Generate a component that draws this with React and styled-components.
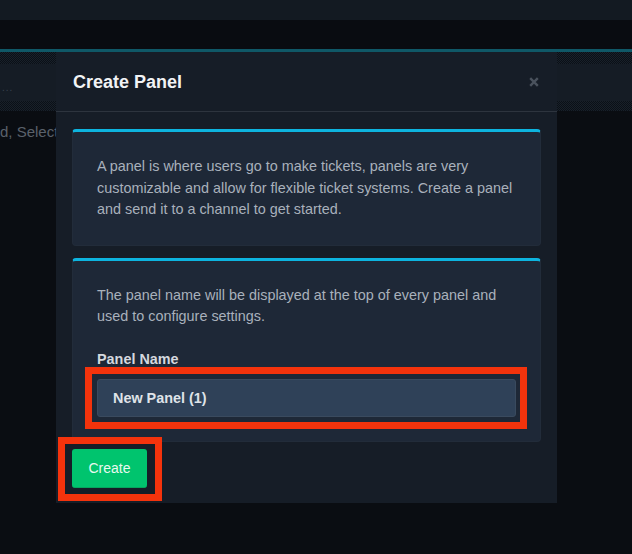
import React from "react";
import styled, { createGlobalStyle } from "styled-components";

const Global = createGlobalStyle`
  html, body { margin: 0; padding: 0; background: #0a0d12; }
  body { font-family: "Liberation Sans", Arial, sans-serif; }
  * { box-sizing: border-box; }
`;

const Page = styled.div`
  position: relative;
  width: 632px;
  height: 554px;
  overflow: hidden;
  background: #0a0d12;
  display: flex;
  flex-direction: column;
`;

const TopBar = styled.div`
  height: 20px;
  background: #131a22;
  flex: none;
`;

const NavBar = styled.div`
  height: 29px;
  background: #090c11;
  flex: none;
`;

const AccentLine = styled.div`
  height: 3px;
  background: #0f5867;
  flex: none;
`;

const Dither = styled.div`
  height: ${(p) => p.$h}px;
  flex: none;
  background-color: #111820;
  background-image: repeating-conic-gradient(#0b1016 0 25%, #18202a 0 50%);
  background-size: 2px 2px;
`;

const SubBar = styled.div`
  height: 37px;
  flex: none;
  background: #151c25;
  display: flex;
  align-items: center;
  padding: 10px 0 0 2px;
  color: #3a4350;
  font-size: 10px;
  letter-spacing: 1px;
`;

const Content = styled.div`
  flex: 1;
  padding: 12px 0 0 0;
  color: #5a616b;
  font-size: 15px;
`;

const Modal = styled.div`
  position: absolute;
  left: 56px;
  top: 52px;
  width: 501px;
  height: 451px;
  background: #161d27;
  display: flex;
  flex-direction: column;
`;

const Header = styled.div`
  height: 60px;
  flex: none;
  display: flex;
  align-items: center;
  justify-content: space-between;
  padding: 0 17px 0 17px;
  border-bottom: 1px solid #2d343e;
`;

const Title = styled.h2`
  margin: 0;
  padding-top: 1px;
  font-size: 18px;
  font-weight: 700;
  color: #f1f3f5;
`;

const Close = styled.span`
  width: 10px;
  height: 10px;
  margin: -8px 1px 0 0;
  display: block;
  color: #4a525d;
`;

const Body = styled.div`
  padding: 17px 16px 0 16px;
  display: flex;
  flex-direction: column;
  gap: 12px;
`;

const Card = styled.div`
  background: #1e2837;
  border: 1px solid #222c3a;
  border-top: 3px solid #0db4df;
  border-radius: 4px;
  padding: 24px 24px 24px 24px;
  display: flex;
  flex-direction: column;
`;

const Text = styled.p`
  margin: 0;
  font-size: 14.4px;
  line-height: 21.6px;
  color: #a9b1bc;
`;

const Label = styled.label`
  margin-top: 21px;
  font-size: 14.4px;
  line-height: 21px;
  font-weight: 600;
  color: #d4d8de;
`;

const Annotated = styled.div`
  position: relative;
  margin-top: ${(p) => p.$mt || 0}px;
  align-self: flex-start;
  width: ${(p) => (p.$full ? "100%" : "auto")};
`;

const Highlight = styled.div`
  position: absolute;
  top: -12px;
  left: ${(p) => -p.$l}px;
  right: ${(p) => -p.$r}px;
  bottom: ${(p) => -p.$b}px;
  border: 7px solid #f4330c;
  pointer-events: none;
`;

const Input = styled.input`
  display: block;
  width: 100%;
  height: 38px;
  background: #2f4158;
  border: 1px solid #3a4a5e;
  border-radius: 3px;
  padding: 0 15px;
  font-family: "Liberation Sans", Arial, sans-serif;
  font-size: 14.4px;
  font-weight: 700;
  color: #dfe3e8;
  outline: none;
`;

const Footer = styled.div`
  padding: 7px 16px 15px 16px;
  display: flex;
`;

const Button = styled.button`
  width: 75px;
  height: 39px;
  background: #00c46e;
  border: none;
  border-bottom: 1px solid #06a65f;
  border-radius: 3px;
  color: #e9f9f0;
  font-family: "Liberation Sans", Arial, sans-serif;
  font-size: 14px;
  padding: 0;
  cursor: pointer;
`;

export default function App() {
  return (
    <>
      <Global />
      <Page>
        <TopBar />
        <NavBar />
        <AccentLine />
        <Dither $h={12} />
        <SubBar>...</SubBar>
        <Dither $h={10} />
        <Content>d, Select</Content>
        <Modal>
          <Header>
            <Title>Create Panel</Title>
            <Close>
              <svg width="10" height="10" viewBox="0 0 10 10">
                <path d="M1.2 1.2 L8.8 8.8 M8.8 1.2 L1.2 8.8" stroke="currentColor" strokeWidth="2.4" strokeLinecap="butt" />
              </svg>
            </Close>
          </Header>
          <Body>
            <Card>
              <Text>
                A panel is where users go to make tickets, panels are very customizable and allow for flexible ticket systems. Create a panel and send it to a channel to get started.
              </Text>
            </Card>
            <Card>
              <Text>
                The panel name will be displayed at the top of every panel and used to configure settings.
              </Text>
              <Label>Panel Name</Label>
              <Annotated $mt={9} $full>
                <Input defaultValue="New Panel (1)" readOnly />
                <Highlight $l={12} $r={11} $b={12} />
              </Annotated>
            </Card>
          </Body>
          <Footer>
            <Annotated>
              <Button>Create</Button>
              <Highlight $l={14} $r={15} $b={13} />
            </Annotated>
          </Footer>
        </Modal>
      </Page>
    </>
  );
}
